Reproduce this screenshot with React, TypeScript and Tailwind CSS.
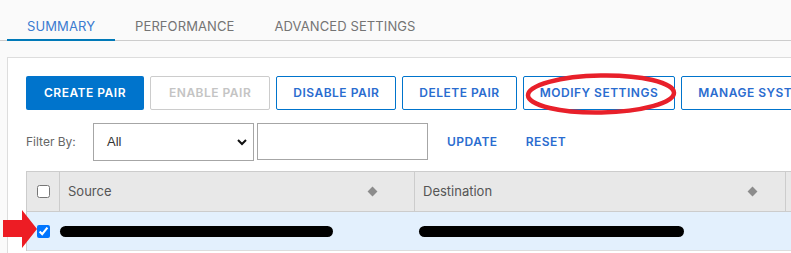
import React from 'react';

const tabs = ['SUMMARY', 'PERFORMANCE', 'ADVANCED SETTINGS'];
const actions = ['DISABLE PAIR', 'DELETE PAIR', 'MODIFY SETTINGS', 'MANAGE SYSTEMS'];

const SortIcon = () => <span className="block w-[7px] h-[7px] rotate-45 bg-[#8c8c8c]" />;

const Redaction = ({ width }: { width: number }) => (
  <span className="block h-[11px] rounded-full bg-black" style={{ width }} />
);

export default function App() {
  return (
    <div className="relative w-[791px] h-[253px] overflow-hidden bg-[#fafafa] text-[#333] font-['Inter','Liberation_Sans',sans-serif]">
      {/* Tabs */}
      <div className="flex pl-[7px] h-[41px] border-b border-[#cccccc]">
        {tabs.map((t, i) => (
          <div
            key={t}
            className={
              i === 0
                ? 'px-5 pt-[17px] text-[13px] tracking-[0.1px] text-[#3b7bd0] border-b-2 border-[#0079b8] -mb-px'
                : 'px-5 pt-[17px] text-[13px] tracking-[0.1px] text-[#747474]'
            }
          >
            {t}
          </div>
        ))}
      </div>

      {/* Panel */}
      <div className="ml-[7px] mt-[16px] bg-white border border-[#dddddd] pl-[18px] pt-[18px] w-[900px] h-[300px]">
        <div className="flex gap-[6px] text-[12px] font-semibold tracking-[0.5px] whitespace-nowrap">
          <button className="h-[34px] px-[18px] rounded-[2px] bg-[#0074cc] text-white">CREATE PAIR</button>
          <button className="h-[34px] px-[18px] rounded-[2px] border border-[#cccccc] text-[#c4c4c4]">ENABLE PAIR</button>
          {actions.map((a) => (
            <button key={a} className="h-[34px] px-[16px] rounded-[2px] border border-[#0074cc] text-[#2a6ccf]">
              {a}
            </button>
          ))}
        </div>

        <div className="flex items-center mt-[13px] h-[38px]">
          <span className="text-[12px] text-[#666] w-[67px]">Filter By:</span>
          <div className="flex items-center justify-between w-[161px] h-[38px] border border-[#a6a6a6] pl-[13px] pr-[5px] text-[13px] text-[#333] font-['Liberation_Sans',sans-serif]">
            <span>All</span>
            <svg width="12" height="12" viewBox="0 0 12 12">
              <path d="M2 4 L6 8 L10 4" fill="none" stroke="#111" strokeWidth="2" />
            </svg>
          </div>
          <div className="ml-[3px] w-[171px] h-[37px] -mt-px border border-[#a6a6a6]" />
          <span className="ml-[19px] text-[12px] font-semibold tracking-[0.5px] text-[#2a6ccf]">UPDATE</span>
          <span className="ml-[28px] text-[12px] font-semibold tracking-[0.5px] text-[#2a6ccf]">RESET</span>
        </div>

        {/* Table */}
        <div className="mt-[10px] border-l border-t border-[#cccccc] w-[900px]">
          <div className="flex h-[40px] bg-[#e8e8e8] border-b border-[#cccccc] text-[13px] text-[#555]">
            <div className="w-[33px] flex items-center justify-center border-r border-[#cccccc]">
              <input type="checkbox" className="w-[13px] h-[13px] m-0" readOnly />
            </div>
            <div className="w-[355px] flex items-center justify-between pl-[8px] pr-[38px] border-r border-[#cccccc]">
              <span>Source</span>
              <SortIcon />
            </div>
            <div className="w-[371px] flex items-center justify-between pl-[8px] pr-[29px] border-r border-[#cccccc]">
              <span>Destination</span>
              <SortIcon />
            </div>
            <div className="flex-1" />
          </div>
          <div className="flex h-[39px] bg-[#e3f0fd] border-b border-[#dddddd]">
            <div className="w-[33px] flex items-center justify-center">
              <input type="checkbox" checked readOnly className="w-[13px] h-[13px] m-0" />
            </div>
            <div className="w-[355px] flex items-center">
              <Redaction width={273} />
            </div>
            <div className="w-[371px] flex items-center pl-[4px]">
              <Redaction width={265} />
            </div>
          </div>
        </div>
      </div>

      {/* Annotation: red ellipse */}
      <svg className="absolute left-[521px] top-[70px]" width="162" height="48" viewBox="0 0 162 48">
        <ellipse cx="80" cy="24" rx="73" ry="18.5" fill="none" stroke="#e8202a" strokeWidth="4.5" transform="rotate(-1 80 24)" />
      </svg>

      {/* Annotation: red arrow */}
      <svg className="absolute left-[3px] top-[210px]" width="36" height="40" viewBox="0 0 36 40">
        <path d="M0 10 L19 10 L19 0 L34 19 L19 38 L19 27 L0 27 Z" fill="#ed1c24" />
      </svg>
    </div>
  );
}
